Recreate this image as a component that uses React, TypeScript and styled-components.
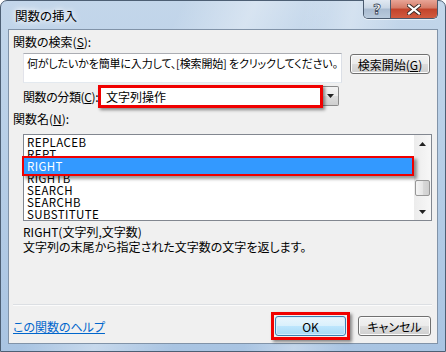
import React from "react";
import styled, { createGlobalStyle } from "styled-components";

const GlobalStyle = createGlobalStyle`
  html, body {
    margin: 0;
    padding: 0;
    width: 446px;
    height: 352px;
    overflow: hidden;
    background: #ffffff;
  }
  body {
    font-family: "Noto Sans CJK JP", "Noto Sans", sans-serif;
    font-size: 12px;
    font-feature-settings: "palt";
    color: #000;
  }
`;

const Frame = styled.div`
  box-sizing: border-box;
  width: 446px;
  height: 352px;
  display: flex;
  flex-direction: column;
  padding: 0 7px 7px 7px;
  border: 1px solid #4d5f74;
  border-radius: 7px 7px 0 0;
  background:
    linear-gradient(115deg, rgba(255, 255, 255, 0) 30%, rgba(255, 255, 255, 0.35) 42%, rgba(255, 255, 255, 0) 55%),
    linear-gradient(100deg, rgba(255, 255, 255, 0) 60%, rgba(255, 255, 255, 0.3) 70%, rgba(255, 255, 255, 0) 80%),
    linear-gradient(to bottom, #c3d6ea 0%, #b8cfe7 40%, #a9c4e2 100%);
`;

const TitleBar = styled.div`
  height: 28px;
  display: flex;
  align-items: flex-start;
  flex-shrink: 0;
`;

const Title = styled.div`
  flex: 1;
  padding: 7px 0 0 7px;
  line-height: 16px;
  font-size: 12.5px;
  text-shadow: 0 0 5px #fff, 0 0 8px #fff;
`;

const CaptionButtons = styled.div`
  display: flex;
  margin-top: -1px;
  border: 1px solid #4a5a6e;
  border-top: none;
  border-radius: 0 0 5px 5px;
  overflow: hidden;
  box-shadow: 0 1px 0 rgba(255, 255, 255, 0.6);
`;

const CaptionButton = styled.div<{ $close?: boolean }>`
  width: ${(p) => (p.$close ? 46 : 26)}px;
  height: 18px;
  display: flex;
  align-items: center;
  justify-content: center;
  background: ${(p) =>
    p.$close
      ? "linear-gradient(to bottom, #e8a597 0%, #d47a66 45%, #c2432b 50%, #d15b3f 100%)"
      : "linear-gradient(to bottom, #e1e9f2 0%, #c9d6e4 45%, #a9bbd0 50%, #b9cadc 100%)"};
  border-left: ${(p) => (p.$close ? "1px solid #4a5a6e" : "none")};
  color: #fff;
  font-family: "DejaVu Sans", sans-serif;
  font-weight: bold;
  font-size: 14px;
  -webkit-text-stroke: 0.8px #3c4a5c;
`;

const Client = styled.div`
  flex: 1;
  display: flex;
  flex-direction: column;
  background: #f0f0f0;
  border: 1px solid #8193a8;
  padding-bottom: 7px;
`;

const Label = styled.div<{ $indent?: number }>`
  margin-left: ${(p) => p.$indent ?? 4}px;
  height: 14px;
  line-height: 14px;
  white-space: nowrap;
`;

const Row = styled.div`
  display: flex;
  align-items: flex-start;
  margin-left: 14px;
`;

const TextArea = styled.div`
  box-sizing: border-box;
  width: 319px;
  height: 30px;
  background: #fff;
  border: 1px solid #abadb3;
  border-color: #abadb3 #dbdfe6 #e3e9ef #e2e3ea;
  padding: 2px 3px;
  line-height: 15px;
  font-size: 11px;
  white-space: nowrap;
  overflow: hidden;
  letter-spacing: -0.15px;
`;

const PushButton = styled.div<{ $default?: boolean; $w: number }>`
  box-sizing: border-box;
  width: ${(p) => p.$w}px;
  height: 20px;
  display: flex;
  align-items: center;
  justify-content: center;
  border: 1px solid ${(p) => (p.$default ? "#3c7fb1" : "#707070")};
  border-radius: 3px;
  box-shadow: inset 0 0 0 1px ${(p) => (p.$default ? "#d6eefc" : "#fcfcfc")};
  background: ${(p) =>
    p.$default
      ? "linear-gradient(to bottom, #eaf6fd 0%, #d9f0fc 50%, #bee6fd 50%, #a7d9f5 100%)"
      : "linear-gradient(to bottom, #f2f2f2 0%, #ebebeb 50%, #dddddd 50%, #cfcfcf 100%)"};
  white-space: nowrap;
`;

const ComboRow = styled.div`
  display: flex;
  align-items: flex-start;
  margin-left: 14px;
  height: 23px;
`;

const ComboLabel = styled.div`
  width: 75px;
  line-height: 23px;
  letter-spacing: -0.4px;
  white-space: nowrap;
`;

const ComboField = styled.div`
  box-sizing: border-box;
  width: 225px;
  height: 23px;
  border: 3px solid #f00000;
  background: #fff;
  padding-left: 5px;
  line-height: 17px;
  box-shadow: 2px 2px 3px rgba(0, 0, 0, 0.45);
  position: relative;
  z-index: 1;
`;

const DropButton = styled.div`
  box-sizing: border-box;
  width: 16px;
  height: 20px;
  margin-top: 1px;
  border: 1px solid #8a8a8a;
  border-left: none;
  border-radius: 0 2px 2px 0;
  background: linear-gradient(to bottom, #f2f2f2 0%, #ebebeb 50%, #dddddd 50%, #cfcfcf 100%);
  display: flex;
  align-items: center;
  justify-content: center;
`;

const ListBox = styled.div`
  box-sizing: border-box;
  margin-left: 14px;
  width: 409px;
  height: 87px;
  border: 1px solid #828790;
  background: #fff;
  display: flex;
`;

const Items = styled.div`
  flex: 1;
  padding-top: 1px;
  padding-right: 2px;
`;

const Item = styled.div<{ $selected?: boolean }>`
  height: 12px;
  line-height: 12px;
  padding-left: 3px;
  font-size: 11.5px;
  letter-spacing: 0.4px;
  position: relative;
  ${(p) =>
    p.$selected &&
    `
    z-index: 1;
    color: #fff;
    background: #3399ff;
    box-shadow: 0 0 0 2px #3399ff, 0 0 0 4px #f00000, 3px 3px 3px 4px rgba(0, 0, 0, 0.4);
    margin-left: 2px;
    margin-right: 2px;
    padding-left: 1px;
  `}
`;

const ScrollBar = styled.div`
  width: 17px;
  display: flex;
  flex-direction: column;
  background: linear-gradient(to right, #ececec, #f7f7f7);
`;

const ScrollArrow = styled.div`
  height: 17px;
  display: flex;
  align-items: center;
  justify-content: center;
`;

const ScrollTrack = styled.div`
  flex: 1;
  display: flex;
  flex-direction: column;
  padding-top: 28px;
`;

const Thumb = styled.div`
  box-sizing: border-box;
  height: 16px;
  margin: 0 1px;
  border: 1px solid #979797;
  border-radius: 2px;
  background: linear-gradient(to right, #f4f4f4, #e6e6e6 50%, #d9d9d9 51%, #cfcfcf);
`;

const Desc = styled.div`
  margin: 3px 0 0 14px;
  line-height: 15px;
  white-space: nowrap;
`;

const Spacer = styled.div`
  flex: 1;
`;

const Separator = styled.div`
  height: 1px;
  margin: 0 5px 11px 4px;
  background: #dcdfe3;
  box-shadow: 0 1px 0 #fbfbfb;
`;

const Footer = styled.div`
  display: flex;
  align-items: center;
  height: 20px;
  padding: 0 6px 0 4px;
`;

const HelpLink = styled.a`
  flex: 1;
  color: #0066cc;
  text-decoration: underline;
  white-space: nowrap;
`;

const Highlight = styled.div`
  margin: -4px -4px;
  padding: 1px;
  border: 3px solid #f00000;
  box-shadow: 2px 2px 3px rgba(0, 0, 0, 0.45);
`;

const Triangle = ({ up }: { up?: boolean }) => (
  <svg width="7" height="4" viewBox="0 0 7 4">
    <path d={up ? "M0 4 L3.5 0 L7 4 Z" : "M0 0 L7 0 L3.5 4 Z"} fill="#222" />
  </svg>
);

const CloseGlyph = () => (
  <svg width="14" height="11" viewBox="0 0 14 11">
    <path d="M2 1.5 L12 9.5 M12 1.5 L2 9.5" stroke="#3b2a26" strokeWidth="4" strokeLinecap="square" />
    <path d="M2 1.5 L12 9.5 M12 1.5 L2 9.5" stroke="#fff" strokeWidth="2.2" strokeLinecap="square" />
  </svg>
);

const functions = ["REPLACEB", "REPT", "RIGHT", "RIGHTB", "SEARCH", "SEARCHB", "SUBSTITUTE"];

export default function App() {
  return (
    <>
      <GlobalStyle />
      <Frame>
        <TitleBar>
          <Title>関数の挿入</Title>
          <CaptionButtons>
            <CaptionButton>?</CaptionButton>
            <CaptionButton $close>
              <CloseGlyph />
            </CaptionButton>
          </CaptionButtons>
        </TitleBar>
        <Client>
          <Label style={{ marginTop: 5 }}>
            関数の検索(<u>S</u>):
          </Label>
          <Row style={{ marginTop: 4 }}>
            <TextArea>何がしたいかを簡単に入力して、[検索開始] をクリックしてください。</TextArea>
            <PushButton $w={80} style={{ marginLeft: 8, marginTop: 1 }}>
              検索開始(<u>G</u>)
            </PushButton>
          </Row>
          <ComboRow style={{ marginTop: 2 }}>
            <ComboLabel>
              関数の分類(<u>C</u>):
            </ComboLabel>
            <ComboField>文字列操作</ComboField>
            <DropButton>
              <Triangle />
            </DropButton>
          </ComboRow>
          <Label style={{ marginTop: 4 }}>
            関数名(<u>N</u>):
          </Label>
          <ListBox style={{ marginTop: 8 }}>
            <Items>
              {functions.map((f) => (
                <Item key={f} $selected={f === "RIGHT"}>
                  {f}
                </Item>
              ))}
            </Items>
            <ScrollBar>
              <ScrollArrow>
                <Triangle up />
              </ScrollArrow>
              <ScrollTrack>
                <Thumb />
              </ScrollTrack>
              <ScrollArrow>
                <Triangle />
              </ScrollArrow>
            </ScrollBar>
          </ListBox>
          <Desc>
            RIGHT(文字列,文字数)
            <br />
            文字列の末尾から指定された文字数の文字を返します。
          </Desc>
          <Spacer />
          <Separator />
          <Footer>
            <HelpLink href="#">この関数のヘルプ</HelpLink>
            <Highlight>
              <PushButton $default $w={71}>
                OK
              </PushButton>
            </Highlight>
            <PushButton $w={73} style={{ marginLeft: 12 }}>
              キャンセル
            </PushButton>
          </Footer>
        </Client>
      </Frame>
    </>
  );
}
